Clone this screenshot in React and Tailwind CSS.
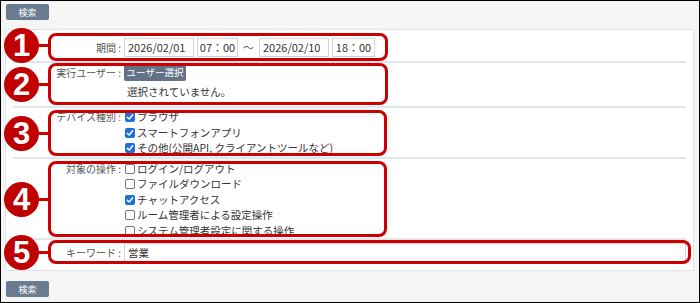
import React from 'react';

const font = { fontFamily: '"Noto Sans CJK JP", "Noto Sans", sans-serif' };

function Check({ checked, label }) {
  return (
    <div className="flex items-center h-[15.5px]">
      {checked ? (
        <span className="w-[10px] h-[10px] shrink-0 rounded-[2px] bg-[#1e6fd9] flex items-center justify-center mr-[2px]">
          <svg width="8" height="8" viewBox="0 0 8 8">
            <path d="M1.3 4.2 L3.2 6 L6.7 1.8" stroke="white" strokeWidth="1.5" fill="none" strokeLinecap="round" strokeLinejoin="round" />
          </svg>
        </span>
      ) : (
        <span className="w-[10px] h-[10px] shrink-0 rounded-[2px] border border-[#767676] bg-white mr-[2px]" />
      )}
      <span className="text-[10.5px] leading-[14px] text-[#333] whitespace-nowrap">{label}</span>
    </div>
  );
}

function Label({ children }) {
  return (
    <div className="w-[111px] shrink-0 text-right text-[10px] leading-[14px] text-[#555] pr-[3px] whitespace-nowrap">
      {children} :
    </div>
  );
}

const boxes = [
  { n: '1', cy: 45, top: 33, h: 28, w: 340 },
  { n: '2', cy: 84, top: 63, h: 42, w: 340 },
  { n: '3', cy: 133, top: 110, h: 46, w: 339 },
  { n: '4', cy: 199, top: 161, h: 76, w: 339 },
  { n: '5', cy: 252, top: 240, h: 24, w: 643 },
];

export default function App() {
  return (
    <div className="relative w-[700px] h-[303px] border border-black bg-[#f5f5f5] overflow-hidden leading-[14px]" style={font}>
      <button className="block ml-[5px] mt-[3px] w-[43px] h-[16px] rounded-[2px] bg-[#6b7b8f] text-white text-[9px] leading-none">検索</button>

      <div className="mt-[9px] ml-[4px] mr-[5px] bg-white border border-[#e2e2e2] rounded-[2px] px-[7px] pb-[4px]">
        {/* 期間 */}
        <div className="flex items-center h-[33px] pt-[4px] border-b-2 border-[#e1e6ec]">
          <Label>期間</Label>
          <div className="flex items-center gap-[3px] text-[11px] leading-[17px] text-[#333]">
            <div className="w-[70px] h-[19px] border border-[#d4d4d4] pl-[3px] flex items-center">2026/02/01</div>
            <div className="w-[41px] h-[19px] border border-[#d4d4d4] flex items-center justify-center">07：00</div>
            <span className="px-[2px] text-[#555]">〜</span>
            <div className="w-[70px] h-[19px] border border-[#d4d4d4] pl-[3px] flex items-center">2026/02/10</div>
            <div className="w-[43px] h-[19px] border border-[#d4d4d4] flex items-center justify-center">18：00</div>
          </div>
        </div>

        {/* 実行ユーザー */}
        <div className="flex h-[45px] pt-[2px] border-b-2 border-[#e1e6ec]">
          <div className="h-[16px] flex items-center"><Label>実行ユーザー</Label></div>
          <div>
            <button className="block w-[62px] h-[16px] rounded-[2px] bg-[#637287] text-white text-[9.5px] leading-none">ユーザー選択</button>
            <div className="mt-[3px] h-[16px] pl-[3px] flex items-center text-[10.5px] leading-[14px] text-[#333]">選択されていません。</div>
          </div>
        </div>

        {/* デバイス種別 */}
        <div className="flex h-[51px] pt-[1.5px] border-b-2 border-[#e1e6ec]">
          <div className="h-[15.5px] flex items-center"><Label>デバイス種別</Label></div>
          <div className="pl-[1px]">
            <Check checked label="ブラウザ" />
            <Check checked label="スマートフォンアプリ" />
            <Check checked label="その他(公開API, クライアントツールなど)" />
          </div>
        </div>

        {/* 対象の操作 */}
        <div className="flex h-[81px] pt-[2px] border-b-2 border-[#e1e6ec]">
          <div className="h-[15.5px] flex items-center"><Label>対象の操作</Label></div>
          <div className="pl-[1px]">
            <Check label="ログイン/ログアウト" />
            <Check label="ファイルダウンロード" />
            <Check checked label="チャットアクセス" />
            <Check label="ルーム管理者による設定操作" />
            <Check label="システム管理者設定に関する操作" />
          </div>
        </div>

        {/* キーワード */}
        <div className="flex items-center h-[26px] pt-[2px] pb-[3px]">
          <Label>キーワード</Label>
          <div className="flex-1 h-[19px] border border-[#d4d4d4] pl-[3px] flex items-center text-[10.5px] text-[#333]">営業</div>
        </div>
      </div>

      <button className="block ml-[5px] mt-[10px] w-[43px] h-[16px] rounded-[2px] bg-[#6b7b8f] text-white text-[9px] leading-none">検索</button>

      {/* annotations */}
      {boxes.map((b) => (
        <React.Fragment key={b.n}>
          <div className="absolute left-[47px] border-[3px] border-[#cc0000] rounded-[8px]" style={{ top: b.top - 1, height: b.h, width: b.w }} />
          <div className="absolute left-[34px] w-[14px] h-[3px] bg-[#cc0000]" style={{ top: b.cy - 2 }} />
          <div
            className="absolute left-[3px] w-[35px] h-[35px] rounded-full bg-[#c00000] flex items-center justify-center text-white font-bold text-[31px] leading-none"
            style={{ top: b.cy - 18, fontFamily: '"Liberation Sans", Arial, sans-serif' }}
          >
            {b.n}
          </div>
        </React.Fragment>
      ))}
    </div>
  );
}
